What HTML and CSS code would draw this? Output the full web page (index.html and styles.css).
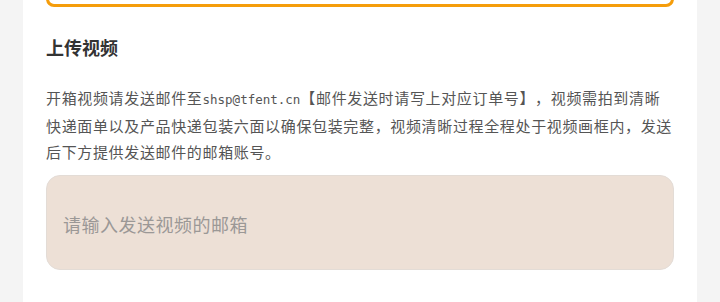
FILE: index.html
```html
<!DOCTYPE html>
<html lang="zh-CN">
<head>
<meta charset="utf-8">
<title>上传视频</title>
<link rel="stylesheet" href="styles.css">
</head>
<body>
<div class="card">
  <div class="highlight-box"></div>
  <h2 class="section-title">上传视频</h2>
  <p class="desc">开箱视频请发送邮件至<span class="mail">shsp@tfent.cn</span>【邮件发送时请写上对应订单号】，视频需拍到清晰快递面单以及产品快递包装六面以确保包装完整，视频清晰过程全程处于视频画框内，发送后下方提供发送邮件的邮箱账号。</p>
  <div class="email-input">
    <input class="email-field" type="text" placeholder="请输入发送视频的邮箱">
  </div>
</div>
</body>
</html>
```

FILE: styles.css
```css
html, body {
  margin: 0;
  padding: 0;
  background: #f4f4f4;
  height: 302px;
  overflow: hidden;
}
.card {
  margin: 0 23px;
  background: #ffffff;
  padding: 0 23px;
  height: 302px;
  box-sizing: border-box;
  font-family: "Noto Sans CJK SC", "Noto Sans", sans-serif;
  display: flow-root;
}
.highlight-box {
  height: 40px;
  margin-top: -33px;
  border: 3px solid #f59d0b;
  border-radius: 8px;
  box-sizing: border-box;
}
.section-title {
  margin: 27px 0 0;
  font-size: 18px;
  line-height: 26px;
  font-weight: 700;
  color: #333333;
}
.desc {
  margin: 25px 0 0;
  font-size: 15px;
  line-height: 26px;
  letter-spacing: 0.65px;
  color: #555555;
  text-spacing-trim: space-all;
}
.mail {
  font-family: "DejaVu Sans Mono", monospace;
  font-size: 12.5px;
  letter-spacing: 0;
}
.email-input {
  margin-top: 10px;
  height: 95px;
  box-sizing: border-box;
  border: 1px solid #e3dcd6;
  border-radius: 14px;
  background: #ede0d6;
  display: flex;
  align-items: center;
  padding: 3px 16px 0;
}
.email-field {
  flex: 1;
  border: none;
  outline: none;
  background: transparent;
  font-family: "Noto Sans CJK SC", "Noto Sans", sans-serif;
  font-size: 18px;
  letter-spacing: 0.5px;
  color: #333;
  padding: 0;
}
.email-field::placeholder {
  color: #9b9896;
}
```
